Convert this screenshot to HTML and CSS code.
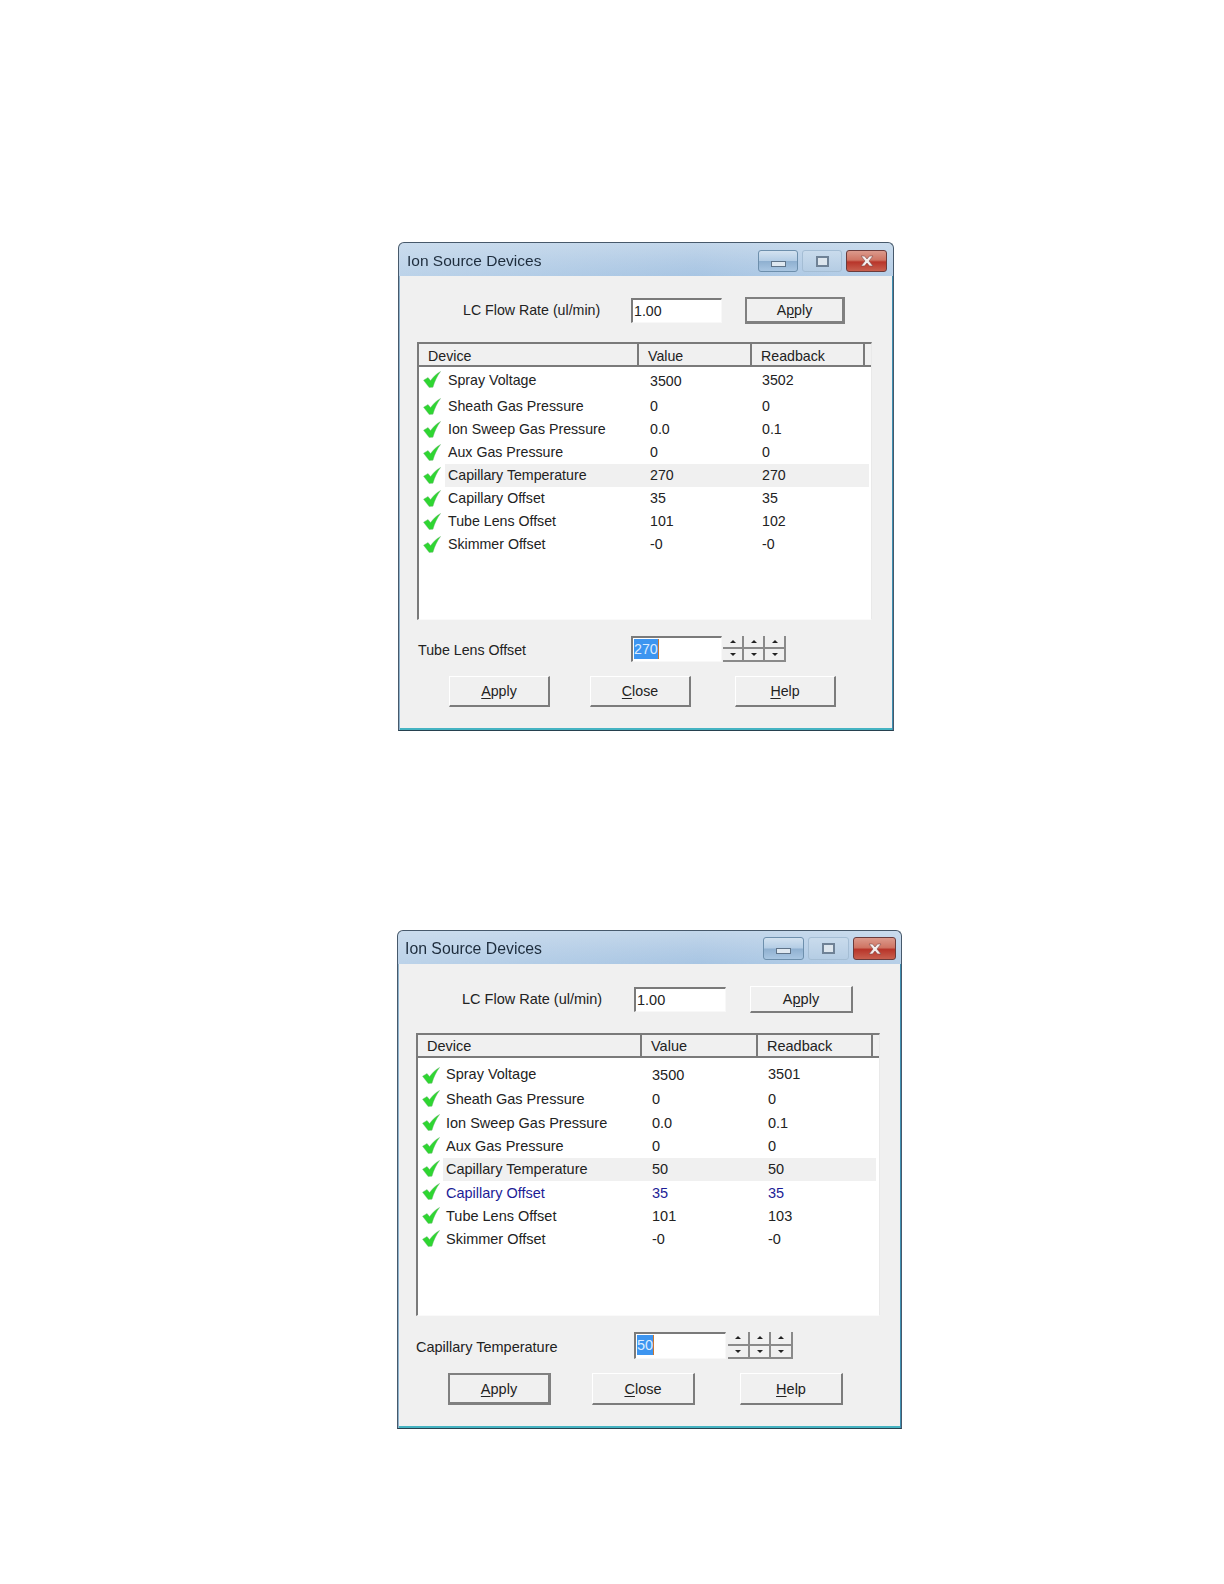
FILE: index.html
```html
<!DOCTYPE html>
<html lang="en">
<head>
<meta charset="utf-8">
<title>Ion Source Devices</title>
<link rel="stylesheet" href="styles.css">
</head>
<body>
<svg class="defs" width="0" height="0" aria-hidden="true">
  <symbol id="check" viewBox="0 0 18 17">
    <path d="M0.5 9.2 L5 6.5 L7.6 9.6 C10 6 13.5 2.6 17.6 0.4 C14.2 5 11.6 10.2 10 16.2 L6.2 16.6 Z" fill="#2ed631" stroke="#7fb384" stroke-width="0.4"/>
  </symbol>
  <symbol id="close-x" viewBox="0 0 16 12">
    <path d="M2 1 H5.5 L8 4 L10.5 1 H14 L10 6 L14 11 H10.5 L8 8 L5.5 11 H2 L6 6 Z" fill="#f4eeee" stroke="#7d4a48" stroke-width="0.6"/>
  </symbol>
</svg>

<section class="dlg d1">
  <header class="titlebar">
    <span class="title">Ion Source Devices</span>
    <div class="winctl">
      <span class="wb wb-min"><i class="glyph-min"></i></span>
      <span class="wb wb-max"><i class="glyph-max"></i></span>
      <span class="wb wb-close"><svg class="glyph-x"><use href="#close-x"/></svg></span>
    </div>
  </header>
  <div class="body">
    <div class="lc-row">
      <span class="lc-label">LC Flow Rate (ul/min)</span>
      <div class="field">1.00</div>
      <button class="btn lc-apply default">A<u>p</u>ply</button>
    </div>
    <div class="list">
      <div class="head">
        <span class="hc hc1">Device</span><span class="hc hc2">Value</span><span class="hc hc3">Readback</span><span class="hc hc4"></span>
      </div>
      <div class="row first"><svg class="chk"><use href="#check"/></svg><div class="cells"><span>Spray Voltage</span><span class="low">3500</span><span>3502</span></div></div>
      <div class="row"><svg class="chk"><use href="#check"/></svg><div class="cells"><span>Sheath Gas Pressure</span><span>0</span><span>0</span></div></div>
      <div class="row"><svg class="chk"><use href="#check"/></svg><div class="cells"><span>Ion Sweep Gas Pressure</span><span>0.0</span><span>0.1</span></div></div>
      <div class="row"><svg class="chk"><use href="#check"/></svg><div class="cells"><span>Aux Gas Pressure</span><span>0</span><span>0</span></div></div>
      <div class="row"><svg class="chk"><use href="#check"/></svg><div class="cells hl"><span>Capillary Temperature</span><span>270</span><span>270</span></div></div>
      <div class="row"><svg class="chk"><use href="#check"/></svg><div class="cells"><span>Capillary Offset</span><span>35</span><span>35</span></div></div>
      <div class="row"><svg class="chk"><use href="#check"/></svg><div class="cells"><span>Tube Lens Offset</span><span>101</span><span>102</span></div></div>
      <div class="row"><svg class="chk"><use href="#check"/></svg><div class="cells"><span>Skimmer Offset</span><span>-0</span><span>-0</span></div></div>
    </div>
    <div class="spin-row">
      <span class="spin-label">Tube Lens Offset</span>
      <div class="field"><span class="sel">270</span></div>
      <div class="spinners">
        <div class="sp"><span class="tri-box"><i class="up"></i></span><span class="tri-box"><i class="down"></i></span></div>
        <div class="sp"><span class="tri-box"><i class="up"></i></span><span class="tri-box"><i class="down"></i></span></div>
        <div class="sp"><span class="tri-box"><i class="up"></i></span><span class="tri-box"><i class="down"></i></span></div>
      </div>
    </div>
    <div class="actions">
      <button class="btn act"><u>A</u>pply</button>
      <button class="btn act"><u>C</u>lose</button>
      <button class="btn act"><u>H</u>elp</button>
    </div>
  </div>
</section>

<section class="dlg d2">
  <header class="titlebar">
    <span class="title">Ion Source Devices</span>
    <div class="winctl">
      <span class="wb wb-min"><i class="glyph-min"></i></span>
      <span class="wb wb-max"><i class="glyph-max"></i></span>
      <span class="wb wb-close"><svg class="glyph-x"><use href="#close-x"/></svg></span>
    </div>
  </header>
  <div class="body">
    <div class="lc-row">
      <span class="lc-label">LC Flow Rate (ul/min)</span>
      <div class="field">1.00</div>
      <button class="btn lc-apply">A<u>p</u>ply</button>
    </div>
    <div class="list">
      <div class="head">
        <span class="hc hc1">Device</span><span class="hc hc2">Value</span><span class="hc hc3">Readback</span><span class="hc hc4"></span>
      </div>
      <div class="row first"><svg class="chk"><use href="#check"/></svg><div class="cells"><span>Spray Voltage</span><span class="low">3500</span><span>3501</span></div></div>
      <div class="row"><svg class="chk"><use href="#check"/></svg><div class="cells"><span>Sheath Gas Pressure</span><span>0</span><span>0</span></div></div>
      <div class="row"><svg class="chk"><use href="#check"/></svg><div class="cells"><span>Ion Sweep Gas Pressure</span><span>0.0</span><span>0.1</span></div></div>
      <div class="row"><svg class="chk"><use href="#check"/></svg><div class="cells"><span>Aux Gas Pressure</span><span>0</span><span>0</span></div></div>
      <div class="row"><svg class="chk"><use href="#check"/></svg><div class="cells hl"><span>Capillary Temperature</span><span>50</span><span>50</span></div></div>
      <div class="row"><svg class="chk"><use href="#check"/></svg><div class="cells blue"><span>Capillary Offset</span><span>35</span><span>35</span></div></div>
      <div class="row"><svg class="chk"><use href="#check"/></svg><div class="cells"><span>Tube Lens Offset</span><span>101</span><span>103</span></div></div>
      <div class="row"><svg class="chk"><use href="#check"/></svg><div class="cells"><span>Skimmer Offset</span><span>-0</span><span>-0</span></div></div>
    </div>
    <div class="spin-row">
      <span class="spin-label">Capillary Temperature</span>
      <div class="field"><span class="sel">50</span></div>
      <div class="spinners">
        <div class="sp"><span class="tri-box"><i class="up"></i></span><span class="tri-box"><i class="down"></i></span></div>
        <div class="sp"><span class="tri-box"><i class="up"></i></span><span class="tri-box"><i class="down"></i></span></div>
        <div class="sp"><span class="tri-box"><i class="up"></i></span><span class="tri-box"><i class="down"></i></span></div>
      </div>
    </div>
    <div class="actions">
      <button class="btn act default"><u>A</u>pply</button>
      <button class="btn act"><u>C</u>lose</button>
      <button class="btn act"><u>H</u>elp</button>
    </div>
  </div>
</section>
</body>
</html>
```

FILE: styles.css
```css
* { box-sizing: border-box; }
html, body { margin: 0; padding: 0; background: #fff; }
body {
  width: 1224px;
  height: 1584px;
  overflow: hidden;
  font-family: "Liberation Sans", Arial, sans-serif;
  color: #222;
}
.defs { position: absolute; }

/* per-dialog metrics */
.d1 {
  --w: 496px; --h: 489px; --fs: 14.2px; --title-fs: 15.5px;
  --title-h: 34px; --title-x: 8px; --title-pt: 3px; --wb-h: 22px; --wb-w: 40px; --wb-close: 41px; --ctl-right: 6px; --ctl-gap: 4px;
  --pt: 21px; --lc-h: 27px; --lc-label: 214px; --field-w: 91px; --apply-gap: 23px; --apply-w: 100px;
  --list-gap: 18px; --list-h: 278px; --head-h: 23px;
  --col1: 220px; --col2: 113px; --col3: 113px;
  --first-h: 28px; --first-pad: 0 0 3px 0; --cell-pb: 1.5px; --row-h: 23px; --row-end: 2px;
  --ic-col: 26px; --ic-x: 4px; --chk-top: 2.5px; --chk-first: 3.5px; --val-col: 202px; --rb-col: 112px;
  --spin-gap: 16px; --spin-h: 26px; --spin-label: 214px; --spin-lx: 1px; --spin-ly: 2px; --spin-w: 63px; --spin-x: 1px;
  --act-gap: 14px; --act-h: 31px; --act-w: 101px; --act-gap1: 40px; --act-gap2: 44px;
  margin: 242px 0 0 398px;
}
.d2 {
  --w: 505px; --h: 499px; --fs: 14.5px; --title-fs: 15.8px;
  --title-h: 34px; --title-x: 7px; --title-pt: 2px; --wb-h: 23px; --wb-w: 41px; --wb-close: 43px; --ctl-right: 5px; --ctl-gap: 4px;
  --pt: 22px; --lc-h: 27px; --lc-label: 218px; --field-w: 92px; --apply-gap: 24px; --apply-w: 103px;
  --list-gap: 20px; --list-h: 283px; --head-h: 22.5px;
  --col1: 224px; --col2: 116px; --col3: 115px;
  --first-h: 30.3px; --first-pad: 3px 0 0 0; --cell-pb: 0px; --row-h: 23.3px; --row-end: 3px;
  --ic-col: 25px; --ic-x: 4px; --chk-top: 2.5px; --chk-first: 9px; --val-col: 206px; --rb-col: 116px;
  --spin-gap: 16px; --spin-h: 27px; --spin-label: 218px; --spin-lx: 0px; --spin-ly: 2px; --spin-w: 65px; --spin-x: 2px;
  --act-gap: 14px; --act-h: 32px; --act-w: 103px; --act-gap1: 41px; --act-gap2: 45px;
  margin: 199px 0 0 397px;
}

.dlg {
  width: var(--w);
  height: var(--h);
  display: flex;
  flex-direction: column;
  font-size: var(--fs);
  filter: blur(0.35px);
}

/* title bar */
.titlebar {
  height: var(--title-h);
  flex: none;
  display: flex;
  align-items: center;
  justify-content: space-between;
  padding: var(--title-pt) var(--ctl-right) 0 var(--title-x);
  border: 1px solid #47596b;
  border-bottom: 0;
  border-radius: 6px 6px 0 0;
  background: linear-gradient(90deg, rgba(205,222,238,.55), rgba(170,198,226,.2) 60%, rgba(205,222,238,.4)),
              linear-gradient(180deg, #c8daec 0%, #b3cce6 60%, #a7c5e3 100%);
}
.title { color: #1d2c3c; font-size: var(--title-fs); }
.winctl { display: flex; gap: var(--ctl-gap); }
.wb {
  height: var(--wb-h);
  width: var(--wb-w);
  display: flex;
  align-items: center;
  justify-content: center;
  border-radius: 3px;
  border: 1px solid #6d8fac;
  background: linear-gradient(180deg, #d3e2f0 0%, #b4cde5 48%, #8fb0d0 52%, #a9c6e2 100%);
}
.wb-max { border-color: #a4bdd4; background: linear-gradient(180deg, #c9dbec 0%, #b5cde4 100%); }
.wb-close {
  width: var(--wb-close);
  border-color: #6b3b3b;
  background: linear-gradient(180deg, #dc9a8c 0%, #cf7564 45%, #b8352a 55%, #c8604f 100%);
}
.glyph-min { display: block; width: 15px; height: 6px; margin-top: 5px; background: #dfe8f0; border: 1px solid #5f7388; }
.glyph-max { display: block; width: 13px; height: 11px; background: #dde6ee; border: 2px solid #6f8296; }
.glyph-x { display: block; width: 16px; height: 12px; }

/* dialog body */
.body {
  flex: 1;
  display: flex;
  flex-direction: column;
  padding: var(--pt) 0 0 18px;
  background: #f0f0f0;
  border-left: 1px solid #47596b;
  border-right: 1px solid #47596b;
  border-bottom: 1px solid #27414f;
  box-shadow: inset 1px 0 0 #8fb2cc, inset -1px 0 0 #3f8fb1, inset 0 -2px 0 #45b3c2;
}

.lc-row, .spin-row { display: flex; align-items: center; flex: none; }
.lc-row { height: var(--lc-h); }
.lc-label { width: var(--lc-label); padding: 0 0 1px 46px; flex: none; }
.field {
  width: var(--field-w);
  height: 25px;
  flex: none;
  padding-left: 1px;
  line-height: 22px;
  background: #fff;
  border-top: 2px solid #7a7a7a;
  border-left: 2px solid #7a7a7a;
  border-right: 1px solid #f8f8f8;
  border-bottom: 1px solid #f8f8f8;
  color: #222;
}
.sel { display: inline-block; height: 20px; line-height: 20px; background: #3d95f0; color: #dcecff; border-right: 1px solid #c9772f; }

.btn {
  font: inherit;
  color: #222;
  padding: 0;
  background: #f0f0f0;
  border: 1px solid #fff;
  border-right: 2px solid #7c7c7c;
  border-bottom: 2px solid #7c7c7c;
}
.btn u { text-underline-offset: 2px; }
.btn.default { border: 2px solid #808080; border-right-width: 3px; border-bottom-width: 3px; }
.lc-apply { width: var(--apply-w); height: 100%; margin-left: var(--apply-gap); }

/* list */
.list {
  width: calc(var(--col1) + var(--col2) + var(--col3) + 9px);
  height: var(--list-h);
  margin-top: var(--list-gap);
  flex: none;
  background: #fff;
  border-top: 2px solid #7a7a7a;
  border-left: 2px solid #7a7a7a;
  border-right: 1px solid #e9e9e9;
  border-bottom: 1px solid #fafafa;
}
.head { display: flex; height: var(--head-h); background: #f0f0f0; }
.hc {
  display: block;
  flex: none;
  height: 100%;
  padding-left: 9px;
  line-height: calc(var(--head-h) + 1px);
  border-right: 2px solid #7a7a7a;
  border-bottom: 2px solid #7a7a7a;
}
.hc1 { width: var(--col1); }
.hc2 { width: var(--col2); }
.hc3 { width: var(--col3); }
.hc4 { flex: 1; padding: 0; border-right: 0; }

.row { display: flex; align-items: stretch; height: var(--row-h); padding-right: var(--row-end); }
.row.first { height: var(--first-h); }
.chk {
  width: calc(18px + var(--ic-x));
  flex: none;
  height: 17px;
  padding-left: var(--ic-x);
  margin-top: var(--chk-top);
  margin-right: calc(var(--ic-col) - 18px - var(--ic-x));
}
.first .chk { margin-top: var(--chk-first); }
.cells {
  flex: 1;
  display: grid;
  grid-template-columns: var(--val-col) var(--rb-col) 1fr;
  align-items: center;
  padding: 0 0 var(--cell-pb) 3px;
}
.first .cells { padding: var(--first-pad); padding-left: 3px; }
.first .low { margin-top: 2px; }
.cells.hl { background: #f0f0f0; }
.cells.blue { color: #1c1c96; }

/* spinner row */
.spin-row { height: var(--spin-h); margin-top: var(--spin-gap); }
.spin-label { width: var(--spin-label); padding: var(--spin-ly) 0 0 var(--spin-lx); flex: none; }
.spin-row .field { height: 100%; }
.spinners { display: flex; width: var(--spin-w); height: 100%; margin-left: var(--spin-x); flex: none; }
.sp { flex: 1; display: flex; flex-direction: column; border-right: 2px solid #8a8a8a; }
.tri-box {
  flex: 1;
  display: flex;
  align-items: center;
  justify-content: center;
  border-bottom: 2px solid #8a8a8a;
}
.up, .down { display: block; width: 0; height: 0; border-left: 3px solid transparent; border-right: 3px solid transparent; }
.up { border-bottom: 3px solid #222; }
.down { border-top: 3px solid #222; }

/* bottom buttons */
.actions { display: flex; height: var(--act-h); margin-top: var(--act-gap); padding-left: 32px; flex: none; }
.act { width: var(--act-w); height: 100%; }
.act:nth-child(2) { margin-left: var(--act-gap1); }
.act:nth-child(3) { margin-left: var(--act-gap2); }
```
